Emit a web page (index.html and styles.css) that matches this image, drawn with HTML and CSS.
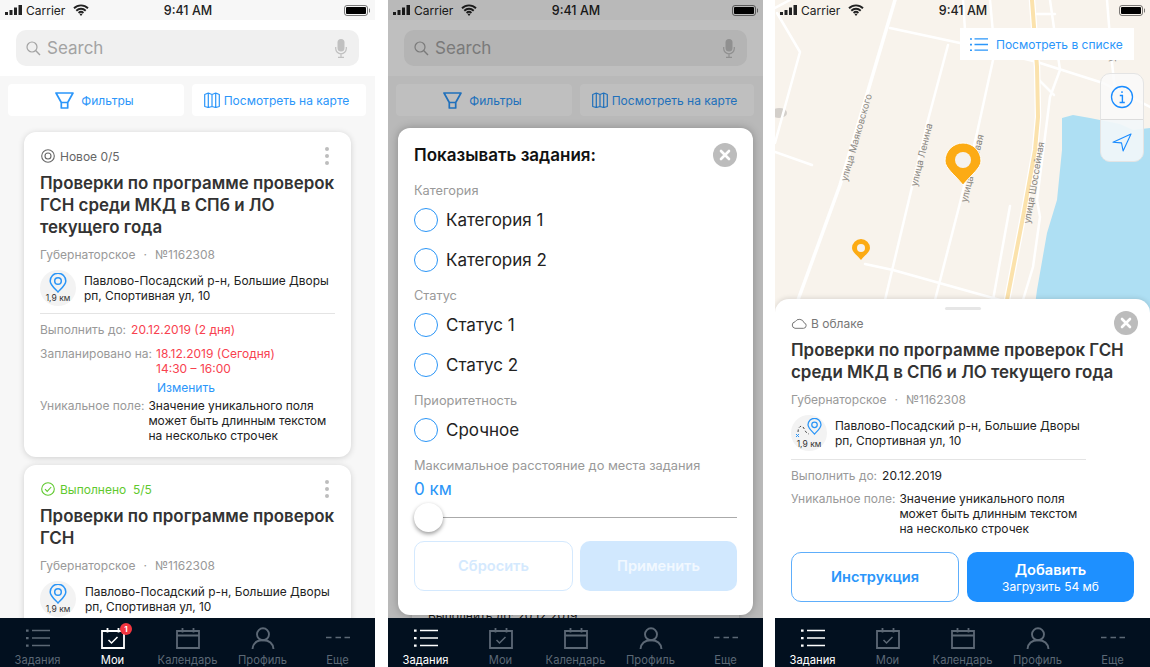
FILE: index.html
```html
<!DOCTYPE html>
<html lang="ru">
<head>
    <meta charset="UTF-8">
    <title>Задания</title>
    <link rel="stylesheet" href="styles.css">
</head>
<body>
    <svg class="sprites" width="0" height="0">
        <symbol id="i-signal" viewBox="0 0 17 10"><path d="M0 7h3v3H0zM4.500 5h3v5h-3zM9 2.500h3V10H9zM13.500 0H17v10h-3.500z" fill="currentColor"/></symbol>
        <symbol id="i-wifi" viewBox="0 0 16 12"><path d="M1 4.200a10 10 0 0 1 14 0M3.300 6.700a6.800 6.800 0 0 1 9.400 0M5.600 9a3.500 3.500 0 0 1 4.800 0" fill="none" stroke="currentColor" stroke-width="1.900"/><path d="M8 12l-1.400-1.700a2 2 0 0 1 2.800 0z" fill="currentColor"/></symbol>
        <symbol id="i-battery" viewBox="0 0 26 11"><rect x=".5" y=".5" width="23" height="10" rx="2.500" fill="none" stroke="currentColor" stroke-opacity=".5"/><rect x="2" y="2" width="20" height="7" rx="1" fill="currentColor"/><path d="M25 3.500a2 2 0 0 1 0 4z" fill="currentColor" fill-opacity=".5"/></symbol>
        <symbol id="i-search" viewBox="0 0 15 15"><circle cx="6" cy="6" r="5" fill="none" stroke="currentColor" stroke-width="1.200"/><path d="M9.600 9.600L14 14" stroke="currentColor" stroke-width="1.400"/></symbol>
        <symbol id="i-mic" viewBox="0 0 12 19"><rect x="2.500" y="0" width="7" height="12.500" rx="3.500" fill="currentColor"/><path d="M.7 8v1.500a5.300 5.300 0 0 0 10.600 0V8M6 15v3M3 18.300h6" fill="none" stroke="currentColor" stroke-width="1.200"/></symbol>
        <symbol id="i-filter" viewBox="0 0 19 17"><path d="M1 1h17l-5.300 9.500v5.500H6.300v-5.500zM6.300 10.500h6.400" fill="none" stroke="currentColor" stroke-width="1.700" stroke-linejoin="round"/></symbol>
        <symbol id="i-map" viewBox="0 0 16 16"><path d="M.7 2.500l3.600-1.500 3.700 1.500 3.700-1.500 3.600 1.500v12l-3.600 1-3.700-1-3.700 1-3.600-1zM4.300 1v14.500M8 2.500v12M11.700 1v14.500" fill="none" stroke="currentColor" stroke-width="1.200" stroke-linejoin="round"/></symbol>
        <symbol id="i-target" viewBox="0 0 14 14"><circle cx="7" cy="7" r="6.300" fill="none" stroke="currentColor" stroke-width="1.100"/><circle cx="7" cy="7" r="3" fill="none" stroke="currentColor" stroke-width="1.100"/></symbol>
        <symbol id="i-done" viewBox="0 0 14 14"><circle cx="7" cy="7" r="6.300" fill="none" stroke="currentColor" stroke-width="1.100"/><path d="M4 7.200l2.200 2.200 4-4.400" fill="none" stroke="currentColor" stroke-width="1.100"/></symbol>
        <symbol id="i-pin" viewBox="0 0 18 20"><path d="M9 19C6 15.800 1.200 12 1.200 8A7.800 7.800 0 0 1 16.800 8C16.800 12 12 15.800 9 19z" fill="none" stroke="currentColor" stroke-width="1.500"/><circle cx="9" cy="8" r="3.300" fill="none" stroke="currentColor" stroke-width="1.500"/></symbol>
        <symbol id="i-close" viewBox="0 0 24 24"><circle cx="12" cy="12" r="12" fill="#bcbcbc"/><path d="M8 8l8 8M16 8l-8 8" stroke="#fff" stroke-width="2.600" stroke-linecap="round"/></symbol>
        <symbol id="i-cloud" viewBox="0 0 16 11"><path d="M4 10.300h8.500a2.800 2.800 0 0 0 .6-5.500A5 5 0 0 0 4 3.800a3.300 3.300 0 0 0 0 6.500z" fill="none" stroke="currentColor" stroke-width="1"/></symbol>
        <symbol id="i-list" viewBox="0 0 24 18"><path d="M6 1.500h18M6 9h18M6 16.500h18" stroke="currentColor" stroke-width="1.700"/><path d="M0 .5h2.600v2.200H0zM0 8h2.600v2.200H0zM0 15.500h2.600v2.200H0z" fill="currentColor"/></symbol>
        <symbol id="i-cal" viewBox="0 0 24 22"><path d="M1 4h22v17H1zM1 8.500h22M6.500 1v4.500M17.500 1v4.500" fill="none" stroke="currentColor" stroke-width="1.800"/></symbol>
        <symbol id="i-cal-check" viewBox="0 0 24 22"><path d="M1 4h22v17H1zM6.500 1v4.500M17.500 1v4.500" fill="none" stroke="currentColor" stroke-width="1.800"/><path d="M7.500 13l3 3 6-6" fill="none" stroke="currentColor" stroke-width="1.500"/></symbol>
        <symbol id="i-user" viewBox="0 0 24 22"><circle cx="12" cy="7.300" r="6" fill="none" stroke="currentColor" stroke-width="1.900"/><path d="M1.500 22c.6-6 5-8.800 10.500-8.800S21.900 16 22.500 22" fill="none" stroke="currentColor" stroke-width="1.900"/></symbol>
        <symbol id="i-more" viewBox="0 0 24 22"><path d="M0 10.500h5.500M9.500 10.500h5.500M18.500 10.500H24" stroke="currentColor" stroke-width="1.300"/></symbol>
    </svg>

    <div class="page">
        <!-- список заданий -->
        <section class="phone">
            <div class="phone-body">
                <div class="status-bar">
                    <div class="status-left"><svg class="st-signal"><use href="#i-signal"/></svg><span>Carrier</span><svg class="st-wifi"><use href="#i-wifi"/></svg></div>
                    <div class="status-time">9:41 AM</div>
                    <div class="status-right"><svg class="st-battery"><use href="#i-battery"/></svg></div>
                </div>
                <div class="search-wrap">
                    <div class="search"><svg class="search-icon"><use href="#i-search"/></svg><span class="search-text">Search</span><svg class="mic-icon"><use href="#i-mic"/></svg></div>
                </div>
                <div class="actions">
                    <div class="action action-filter"><svg class="ic-filter"><use href="#i-filter"/></svg>Фильтры</div>
                    <div class="action action-map"><svg class="ic-map"><use href="#i-map"/></svg>Посмотреть на карте</div>
                </div>
                <div class="cards">
                    <article class="card">
                        <div class="card-status"><svg class="ic-status"><use href="#i-target"/></svg><span>Новое 0/5</span><div class="kebab"><i></i><i></i><i></i></div></div>
                        <h3 class="task-title">Проверки по программе проверок ГСН среди МКД в СПб и ЛО текущего года</h3>
                        <div class="task-sub"><span>Губернаторское</span><span>·</span><span>№1162308</span></div>
                        <div class="geo">
                            <div class="geo-badge"><svg class="ic-pin"><use href="#i-pin"/></svg><span>1,9 км</span></div>
                            <div class="geo-text">Павлово-Посадский р-н, Большие Дворы<br>рп, Спортивная ул, 10</div>
                        </div>
                        <div class="divider"></div>
                        <div class="field field-due"><span class="field-label">Выполнить до:</span><span class="field-red">20.12.2019 (2 дня)</span></div>
                        <div class="field field-plan"><span class="field-label">Запланировано на:</span><div><div class="field-red">18.12.2019 (Сегодня)<br>14:30 – 16:00</div><div class="field-link">Изменить</div></div></div>
                        <div class="field field-uniq"><span class="field-label">Уникальное поле:</span><span class="field-value">Значение уникального поля<br>может быть длинным текстом<br>на несколько строчек</span></div>
                    </article>
                    <article class="card card-second">
                        <div class="card-status status-done"><svg class="ic-status"><use href="#i-done"/></svg><span>Выполнено&nbsp; 5/5</span><div class="kebab"><i></i><i></i><i></i></div></div>
                        <h3 class="task-title">Проверки по программе проверок ГСН</h3>
                        <div class="task-sub"><span>Губернаторское</span><span>·</span><span>№1162308</span></div>
                        <div class="geo">
                            <div class="geo-badge"><svg class="ic-pin"><use href="#i-pin"/></svg><span>1,9 км</span></div>
                            <div class="geo-text geo-text-wide">Павлово-Посадский р-н, Большие Дворы<br>рп, Спортивная ул, 10</div>
                        </div>
                    </article>
                </div>
            </div>
            <nav class="tabs">
                <div class="tab"><svg><use href="#i-list"/></svg><span>Задания</span></div>
                <div class="tab tab-active"><svg><use href="#i-cal-check"/></svg><b class="badge">1</b><span>Мои</span></div>
                <div class="tab"><svg><use href="#i-cal"/></svg><span>Календарь</span></div>
                <div class="tab"><svg><use href="#i-user"/></svg><span>Профиль</span></div>
                <div class="tab"><svg><use href="#i-more"/></svg><span>Еще</span></div>
            </nav>
        </section>

        <!-- фильтры -->
        <section class="phone">
            <div class="phone-body">
                <div class="status-bar">
                    <div class="status-left"><svg class="st-signal"><use href="#i-signal"/></svg><span>Carrier</span><svg class="st-wifi"><use href="#i-wifi"/></svg></div>
                    <div class="status-time">9:41 AM</div>
                    <div class="status-right"><svg class="st-battery"><use href="#i-battery"/></svg></div>
                </div>
                <div class="search-wrap">
                    <div class="search"><svg class="search-icon"><use href="#i-search"/></svg><span class="search-text">Search</span><svg class="mic-icon"><use href="#i-mic"/></svg></div>
                </div>
                <div class="actions">
                    <div class="action action-filter"><svg class="ic-filter"><use href="#i-filter"/></svg>Фильтры</div>
                    <div class="action action-map"><svg class="ic-map"><use href="#i-map"/></svg>Посмотреть на карте</div>
                </div>
                <div class="cards">
                    <article class="card card-peek"><div class="peek-text">Выполнить до: 20.12.2019</div></article>
                </div>
                <div class="overlay">
                    <div class="modal">
                        <div class="modal-head"><h2>Показывать задания:</h2><svg class="ic-close"><use href="#i-close"/></svg></div>
                        <div class="group-label label-first">Категория</div>
                        <div class="radio"><i></i>Категория 1</div>
                        <div class="radio"><i></i>Категория 2</div>
                        <div class="group-label">Статус</div>
                        <div class="radio"><i></i>Статус 1</div>
                        <div class="radio"><i></i>Статус 2</div>
                        <div class="group-label">Приоритетность</div>
                        <div class="radio"><i></i>Срочное</div>
                        <div class="group-label">Максимальное расстояние до места задания</div>
                        <div class="range-value">0 км</div>
                        <div class="slider"><i></i></div>
                        <div class="modal-buttons">
                            <div class="btn btn-off-outline">Сбросить</div>
                            <div class="btn btn-off-fill">Применить</div>
                        </div>
                    </div>
                </div>
            </div>
            <nav class="tabs">
                <div class="tab tab-active"><svg><use href="#i-list"/></svg><span>Задания</span></div>
                <div class="tab"><svg><use href="#i-cal-check"/></svg><span>Мои</span></div>
                <div class="tab"><svg><use href="#i-cal"/></svg><span>Календарь</span></div>
                <div class="tab"><svg><use href="#i-user"/></svg><span>Профиль</span></div>
                <div class="tab"><svg><use href="#i-more"/></svg><span>Еще</span></div>
            </nav>
        </section>

        <!-- карта -->
        <section class="phone">
            <div class="phone-body">
                <div class="map-wrap">
                    <svg class="map" viewBox="0 0 375 320">
                        <rect width="375" height="320" fill="#f8f3ec"/>
                        <path d="M287 118L298 115L315 118L345 124L358 130L375 128V320H258L262 290L272 233L282 200L287 150Z" fill="#aedff3"/>
                        <ellipse cx="4" cy="113" rx="8" ry="5" fill="#c9c6c2" opacity=".8"/>
                        <g fill="none" stroke="#fff" stroke-width="2.500" stroke-linecap="round" stroke-linejoin="round">
                            <path d="M120 0L65 185L23 300" stroke-width="3.500"/>
                            <path d="M115 28L185 43L262 62L328 83L375 107"/>
                            <path d="M2 13L25 52L0 143M0 8L15 0"/>
                            <path d="M0 152L37 165"/>
                            <path d="M173 45L153 120L110 300"/>
                            <path d="M218 60L202 133L185 203L160 300"/>
                            <path d="M188 0L190 30M215 0L218 33"/>
                            <path d="M90 264L118 270L225 300"/>
                            <path d="M235 206L218 300"/>
                            <path d="M275 0L285 70L275 97L262 200L265 217L258 267L248 300"/>
                            <path d="M262 14H280M264 80L279 95"/>
                            <path d="M332 0L337 63L340 90"/>
                            <path d="M257 0L262 67L263 117L260 150L248 217L232 300" stroke-width="6.500"/>
                            <path d="M257 0L262 67L263 117L260 150L248 217L232 300" stroke="#fbe2ac" stroke-width="4"/>
                        </g>
                        <g class="map-labels">
                            <text transform="translate(72 182) rotate(-74)">улица Маяковского</text>
                            <text transform="translate(142 187) rotate(-76)">улица Ленина</text>
                            <text transform="translate(192 203) rotate(-76)">улица Садовая</text>
                            <text transform="translate(255 224) rotate(-80)">улица Шоссейная</text>
                            <text transform="translate(339 62) rotate(-88)">улица</text>
                        </g>
                        <path d="M188 185C180 175 170 168 170 161A18 18 0 0 1 206 161C206 168 196 175 188 185Z" fill="#fcab14" stroke="#fff" stroke-width="1"/>
                        <circle cx="188" cy="160" r="8" fill="#f5f2ee"/>
                        <path d="M86 260C82 255 77 252 77 248A9 9 0 0 1 95 248C95 252 90 255 86 260Z" fill="#fcab14"/>
                        <circle cx="86" cy="248" r="4" fill="#f5f2ee"/>
                    </svg>
                    <div class="status-bar status-map">
                        <div class="status-left"><svg class="st-signal"><use href="#i-signal"/></svg><span>Carrier</span><svg class="st-wifi"><use href="#i-wifi"/></svg></div>
                        <div class="status-time">9:41 AM</div>
                        <div class="status-right"><svg class="st-battery"><use href="#i-battery"/></svg></div>
                    </div>
                    <div class="list-btn"><svg class="ic-list"><use href="#i-list"/></svg>Посмотреть в списке</div>
                    <div class="map-controls">
                        <div class="map-control">
                            <svg class="ic-info" viewBox="0 0 24 24"><circle cx="12" cy="12" r="10.500" fill="none" stroke="#1a8cff" stroke-width="1.300"/><path d="M12 6.200v1.800M9.800 10.500h2.600v6.800M9.600 17.500h5.200" fill="none" stroke="#1a8cff" stroke-width="1.400"/></svg>
                        </div>
                        <div class="map-control map-control-low">
                            <svg class="ic-nav" viewBox="0 0 20 19"><path d="M19 1L1 9.300l8.500.6 1.600 8z" fill="none" stroke="#1a8cff" stroke-width="1.100" stroke-linejoin="round"/></svg>
                        </div>
                    </div>
                </div>
                <div class="sheet">
                    <div class="handle"></div>
                    <div class="sheet-top"><svg class="ic-cloud"><use href="#i-cloud"/></svg><span>В облаке</span><svg class="ic-close"><use href="#i-close"/></svg></div>
                    <h3 class="task-title sheet-title">Проверки по программе проверок ГСН среди МКД в СПб и ЛО текущего года</h3>
                    <div class="task-sub"><span>Губернаторское</span><span>·</span><span>№1162308</span></div>
                    <div class="geo">
                        <div class="geo-badge geo-route">
                            <svg class="ic-route" viewBox="0 0 28 22"><path d="M3 15c0-5 3-7 5-5s2 6 6 7" fill="none" stroke="#444" stroke-width="1" stroke-dasharray="2.500 2"/><path d="M1 17l3 3M4 17l-3 3" stroke="#2a95f7" stroke-width="1"/></svg>
                            <svg class="ic-pin-small"><use href="#i-pin"/></svg>
                            <span>1,9 км</span>
                        </div>
                        <div class="geo-text">Павлово-Посадский р-н, Большие Дворы<br>рп, Спортивная ул, 10</div>
                    </div>
                    <div class="divider"></div>
                    <div class="field field-due"><span class="field-label">Выполнить до:</span><span class="field-value">20.12.2019</span></div>
                    <div class="field sheet-uniq"><span class="field-label">Уникальное поле:</span><span class="field-value">Значение уникального поля<br>может быть длинным текстом<br>на несколько строчек</span></div>
                    <div class="sheet-buttons">
                        <div class="btn btn-outline">Инструкция</div>
                        <div class="btn btn-fill"><span>Добавить</span><small>Загрузить 54 мб</small></div>
                    </div>
                </div>
            </div>
            <nav class="tabs">
                <div class="tab tab-active"><svg><use href="#i-list"/></svg><span>Задания</span></div>
                <div class="tab"><svg><use href="#i-cal-check"/></svg><span>Мои</span></div>
                <div class="tab"><svg><use href="#i-cal"/></svg><span>Календарь</span></div>
                <div class="tab"><svg><use href="#i-user"/></svg><span>Профиль</span></div>
                <div class="tab"><svg><use href="#i-more"/></svg><span>Еще</span></div>
            </nav>
        </section>
    </div>
</body>
</html>
```
FILE: styles.css
```css
* {
    box-sizing: border-box;
}

body {
    margin: 0;
    background: #fff;
    font-family: Inter, "Noto Sans", sans-serif;
    color: #222;
    overflow: hidden;
}

.sprites {
    position: absolute;
}

.page {
    display: flex;
    gap: 12px;
    height: 667px;
}

.phone {
    width: 375px;
    height: 667px;
    flex: none;
    display: flex;
    flex-direction: column;
    overflow: hidden;
    background: #f7f7f7;
}

.phone:first-child {
    margin-right: 1px;
}

.phone-body {
    flex: 1;
    min-height: 0;
    position: relative;
    display: flex;
    flex-direction: column;
    overflow: hidden;
}

/* status bar */
.status-bar {
    height: 20px;
    flex: none;
    display: grid;
    grid-template-columns: 1fr auto 1fr;
    align-items: center;
    padding: 0 5px;
    font-size: 12px;
    color: #222;
    background: #f7f7f7;
}

.status-map {
    position: relative;
    background: none;
}

.status-left {
    display: flex;
    align-items: center;
}

.status-time {
    margin-left: 1px;
    font-weight: 500;
    font-size: 12.500px;
}

.status-right {
    display: flex;
    justify-content: flex-end;
}

.st-signal {
    width: 17px;
    height: 10px;
    margin-right: 4px;
}

.st-wifi {
    width: 16px;
    height: 12px;
    margin-left: 8px;
}

.st-battery {
    width: 26px;
    height: 11px;
    color: #000;
}

/* search */
.search-wrap {
    flex: none;
    height: 56px;
    padding: 10px 16px;
    background: #fff;
}

.search {
    height: 36px;
    border-radius: 10px;
    background: #f0f0f0;
    display: flex;
    align-items: center;
    padding: 0 12px 0 10px;
    color: #a3a3a3;
}

.search-icon {
    width: 15px;
    height: 15px;
}

.search-text {
    flex: 1;
    margin-left: 6px;
    font-size: 17px;
}

.mic-icon {
    width: 12px;
    height: 19px;
    color: #c0c0c0;
}

/* filter + map buttons */
.actions {
    flex: none;
    display: flex;
    gap: 8px;
    padding: 8px 9px 0 8px;
}

.action {
    height: 32px;
    border-radius: 4px;
    background: #fff;
    color: #2b96fa;
    font-size: 12px;
    display: flex;
    align-items: center;
    justify-content: center;
}

.action-filter {
    width: 176px;
    gap: 7px;
    padding-right: 3px;
}

.action-map {
    flex: 1;
    gap: 4px;
    padding-right: 5px;
}

.ic-filter {
    width: 19px;
    height: 17px;
}

.ic-map {
    width: 16px;
    height: 16px;
}

/* task cards */
.cards {
    flex: 1;
    min-height: 0;
    padding: 16px 24px 0;
    display: flex;
    flex-direction: column;
    gap: 8px;
}

.card {
    flex: none;
    height: 325px;
    padding: 16px 16px 0;
    border-radius: 12px;
    background: #fff;
    box-shadow: 0 1px 6px rgba(0, 0, 0, .16);
}

.card-status {
    height: 16px;
    display: flex;
    align-items: center;
    font-size: 12px;
    color: #666;
}

.status-done {
    color: #5fc92e;
}

.ic-status {
    width: 14px;
    height: 14px;
    margin: 0 5px 0 1px;
}

.kebab {
    margin-left: auto;
    margin-right: 6px;
    display: flex;
    flex-direction: column;
    gap: 3px;
}

.kebab i {
    display: block;
    width: 4px;
    height: 4px;
    border-radius: 50%;
    background: #bdbdbd;
}

.task-title {
    margin: 8px 0 0;
    font-size: 16.900px;
    line-height: 22px;
    font-weight: 600;
    color: #333;
}

.task-sub {
    margin-top: 9px;
    display: flex;
    gap: 8px;
    font-size: 12px;
    line-height: 16px;
    color: #999;
}

.geo {
    margin-top: 7px;
    display: flex;
    align-items: center;
    gap: 8px;
}

.geo-badge {
    flex: none;
    width: 36px;
    height: 36px;
    border-radius: 50%;
    background: #f3f3f3;
    display: flex;
    flex-direction: column;
    align-items: center;
    padding-top: 2px;
}

.geo-badge span {
    font-size: 8.500px;
    line-height: 10px;
    color: #333;
}

.ic-pin {
    width: 18px;
    height: 20px;
    color: #2a95f7;
    margin-top: 1px;
}

.geo-text {
    font-size: 11.900px;
    line-height: 15px;
    color: #222;
    white-space: nowrap;
}

.geo-text-wide {
    margin-left: 1px;
}

.divider {
    height: 1px;
    margin-top: 7px;
    width: 295px;
    background: #e4e4e4;
}

.field {
    display: flex;
    font-size: 12px;
    line-height: 15px;
    white-space: nowrap;
}

.field-label {
    color: #999;
}

.field-red {
    color: #f8424f;
}

.field-value {
    color: #222;
}

.field-link {
    margin-top: 4px;
    padding-left: 1px;
    color: #2b96fa;
}

.field-due {
    margin-top: 8px;
    gap: 5px;
}

.field-plan {
    margin-top: 9px;
    gap: 4px;
}

.field-uniq {
    margin-top: 3px;
    gap: 4px;
}

.card-peek {
    height: 600px;
    padding-top: 476px;
}

.peek-text {
    font-size: 12px;
    line-height: 15px;
    color: #222;
}

/* tab bar */
.tabs {
    flex: none;
    height: 49px;
    display: grid;
    grid-template-columns: repeat(5, 1fr);
    background: #02101f;
    color: #5c6875;
}

.tab {
    position: relative;
    display: flex;
    flex-direction: column;
    align-items: center;
    padding-top: 9px;
}

.tab svg {
    width: 24px;
    height: 22px;
}

.tab span {
    font-size: 11.200px;
    line-height: 14px;
    margin-top: 4px;
    white-space: nowrap;
}

.tab-active {
    color: #fff;
}

.badge {
    position: absolute;
    top: 5px;
    left: 45px;
    width: 12px;
    height: 12px;
    border-radius: 50%;
    background: #f2353f;
    color: #fff;
    font-size: 8px;
    line-height: 12px;
    text-align: center;
    font-weight: 700;
}

/* filter modal */
.overlay {
    position: absolute;
    inset: 0;
    padding: 128px 10px 3px;
    background: rgba(0, 0, 0, .25);
}

.modal {
    height: 487px;
    padding: 14px 16px 0;
    border-radius: 12px;
    background: #fff;
    box-shadow: 0 0 8px rgba(0, 0, 0, .25);
}

.modal-head {
    display: flex;
    align-items: center;
    justify-content: space-between;
    height: 26px;
}

.modal-head h2 {
    margin: 0;
    font-size: 17px;
    font-weight: 600;
    color: #111;
}

.ic-close {
    width: 24px;
    height: 24px;
    flex: none;
}

.group-label {
    margin-top: 15.500px;
    font-size: 12.800px;
    line-height: 16px;
    color: #999;
}

.label-first {
    margin-top: 14.500px;
}

.radio {
    height: 24px;
    margin-top: 16px;
    display: flex;
    align-items: center;
    gap: 8px;
    font-size: 17px;
    color: #222;
}

.group-label + .radio {
    margin-top: 9.500px;
}

.radio i {
    width: 24px;
    height: 24px;
    border: 1px solid #2a95f7;
    border-radius: 50%;
}

.range-value {
    margin-top: 4px;
    font-size: 17px;
    line-height: 22px;
    color: #2a95f7;
}

.slider {
    position: relative;
    height: 30px;
    margin-top: 3px;
}

.slider::before {
    content: "";
    position: absolute;
    left: 28px;
    right: 0;
    top: 14px;
    height: 1px;
    background: #aaa;
}

.slider i {
    position: absolute;
    left: 0;
    top: 0;
    width: 29px;
    height: 29px;
    border-radius: 50%;
    background: #fff;
    box-shadow: 0 2px 4px rgba(0, 0, 0, .4);
}

.modal-buttons {
    margin-top: 8px;
    display: flex;
    gap: 7px;
}

.btn {
    flex: 1;
    height: 50px;
    border-radius: 10px;
    display: flex;
    flex-direction: column;
    align-items: center;
    justify-content: center;
    font-size: 14.600px;
    font-weight: 600;
}

.btn-off-outline {
    border: 1px solid #d4e9fe;
    color: #d4e9fe;
}

.btn-off-fill {
    background: #d1e8fe;
    color: #f1f8ff;
}

/* map screen */
.map-wrap {
    flex: 1;
    min-height: 0;
    position: relative;
    margin-bottom: -14px;
}

.map {
    position: absolute;
    left: 0;
    top: 0;
    width: 375px;
    height: 320px;
}

.map-labels text {
    font-size: 9.500px;
    fill: #8a8782;
}

.list-btn {
    position: absolute;
    top: 28px;
    left: 185px;
    width: 174px;
    height: 32px;
    display: flex;
    align-items: center;
    gap: 8px;
    padding-left: 10px;
    background: #fff;
    color: #2b96fa;
    font-size: 12px;
    white-space: nowrap;
}

.ic-list {
    width: 18px;
    height: 15px;
}

.map-controls {
    position: absolute;
    top: 73px;
    left: 325px;
    width: 44px;
    height: 89px;
    border-radius: 10px;
    border: 1px solid #e4e4e4;
    background: rgba(250, 250, 250, .82);
    overflow: hidden;
}

.map-control {
    height: 45px;
    display: flex;
    align-items: center;
    justify-content: center;
}

.map-control-low {
    border-top: 1px solid #dcdcdc;
    background: rgba(235, 245, 250, .5);
}

.ic-info {
    width: 24px;
    height: 24px;
}

.ic-nav {
    width: 20px;
    height: 19px;
}

.sheet {
    flex: none;
    position: relative;
    height: 319px;
    padding: 8px 16px 0;
    border-radius: 14px 14px 0 0;
    background: #fff;
    box-shadow: 0 -1px 5px rgba(0, 0, 0, .12);
}

.sheet .divider {
    margin-top: 8px;
}

.handle {
    width: 36px;
    height: 3px;
    margin: 0 auto;
    border-radius: 2px;
    background: #e6e6e6;
}

.sheet-top {
    margin-top: 1px;
    height: 24px;
    display: flex;
    align-items: center;
    font-size: 12px;
    color: #777;
}

.sheet-top .ic-close {
    margin-left: auto;
    margin-right: -4px;
}

.ic-cloud {
    width: 16px;
    height: 11px;
    margin-right: 4px;
}

.sheet-title {
    margin-top: 4px;
}

.geo-route {
    position: relative;
    padding-top: 24px;
}

.ic-route {
    position: absolute;
    left: 4px;
    top: 2px;
    width: 28px;
    height: 22px;
}

.ic-pin-small {
    position: absolute;
    left: 16px;
    top: 3px;
    width: 15px;
    height: 17px;
    color: #2a95f7;
}

.sheet-uniq {
    margin-top: 8px;
    gap: 4px;
}

.sheet-buttons {
    margin-top: 16px;
    display: flex;
    gap: 8px;
    width: 343px;
}

.btn-outline {
    flex: none;
    width: 168px;
    border: 1px solid #5eaefb;
    color: #2b96fa;
}

.btn-fill {
    background: #1e90ff;
    color: #fff;
}

.btn-fill small {
    font-size: 12px;
    font-weight: 400;
}
```
